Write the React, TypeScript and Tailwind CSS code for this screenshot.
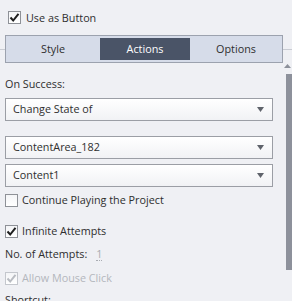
import React from "react";

const FONT = "font-['Open_Sans','Segoe_UI',sans-serif]";

function Check({ checked, disabled }: { checked?: boolean; disabled?: boolean }) {
	return (
		<span
			className={
				"flex h-[13px] w-[13px] items-center justify-center border bg-gradient-to-b from-[#f4f5f7] to-white " +
				(disabled ? "border-[#c4c7cd]" : "border-[#8e9197]")
			}
		>
			{checked && (
				<svg width="11" height="11" viewBox="0 0 11 11">
					<path
						d="M1.5 5.5 L4.2 8.5 L9.5 1.8"
						fill="none"
						stroke={disabled ? "#b9bcc2" : "#1e1e1e"}
						strokeWidth="2"
					/>
				</svg>
			)}
		</span>
	);
}

function Select({ value, className = "" }: { value: string; className?: string }) {
	return (
		<div
			className={
				"flex h-[23px] w-[268px] items-center justify-between border border-[#9b9ea5] bg-gradient-to-b from-white to-[#f1f2f5] pl-[7px] pr-[8px] " +
				className
			}
		>
			<span>{value}</span>
			<svg width="7" height="5" viewBox="0 0 7 5">
				<path d="M0 0 H7 L3.5 5 Z" fill="#5f636b" />
			</svg>
		</div>
	);
}

export default function App() {
	return (
		<div className={`h-[301px] w-[292px] overflow-hidden bg-[#eff0f4] text-[10.8px] text-[#2e2e2e] ${FONT}`}>
			{/* header */}
			<div className="flex h-[35px] items-start gap-[5px] pl-[8px] pt-[11px]">
				<Check checked />
				<span className="leading-[13px]">Use as Button</span>
			</div>

			{/* tabs */}
			<div className="flex items-center">
				<div className="h-px w-[5px] bg-[#c9ccd3]" />
				<div className="flex h-[28px] w-[278px] items-center border border-[#9ca2ae] bg-[#d6dce9]">
					<div className="flex w-[94px] justify-center">Style</div>
					<div className="flex h-[22px] w-[90px] items-center justify-center bg-[#4a5467] text-white">Actions</div>
					<div className="flex flex-1 justify-center">Options</div>
				</div>
				<div className="h-px flex-1 bg-[#c9ccd3]" />
			</div>

			<div className="flex">
				{/* panel content */}
				<div className="flex w-[284px] flex-col pl-[5px]">
					<div className="mt-[13px] leading-[16px]">On Success:</div>
					<Select value="Change State of" className="mt-[6px]" />
					<Select value="ContentArea_182" className="mt-[15px]" />
					<Select value="Content1" className="mt-[5px]" />
					<div className="mt-[5px] flex items-center gap-[4px] leading-[16px]">
						<Check />
						<span>Continue Playing the Project</span>
					</div>
					<div className="mt-[15px] flex items-center gap-[4px] leading-[16px]">
						<Check checked />
						<span>Infinite Attempts</span>
					</div>
					<div className="mt-[7px] flex items-center leading-[16px]">
						<span>No. of Attempts:</span>
						<span className="ml-[9px] border-b border-dotted border-[#a9acb2] leading-[13px] text-[#a9acb2]">1</span>
					</div>
					<div className="mt-[8px] flex items-center gap-[4px] leading-[16px] text-[#b4b7bd]">
						<Check checked disabled />
						<span>Allow Mouse Click</span>
					</div>
					<div className="mt-[6px] leading-[16px]">Shortcut:</div>
				</div>

				{/* scrollbar */}
				<div className="flex w-[8px] flex-col items-end pt-[1px]">
					<svg width="7" height="4" viewBox="0 0 7 4" className="mr-[1px]">
						<path d="M0 4 L3.5 0 L7 4 Z" fill="#8c909a" />
					</svg>
					<div className="mt-[6px] h-[196px] w-[6px] bg-[#8d919b]" />
				</div>
			</div>
		</div>
	);
}
